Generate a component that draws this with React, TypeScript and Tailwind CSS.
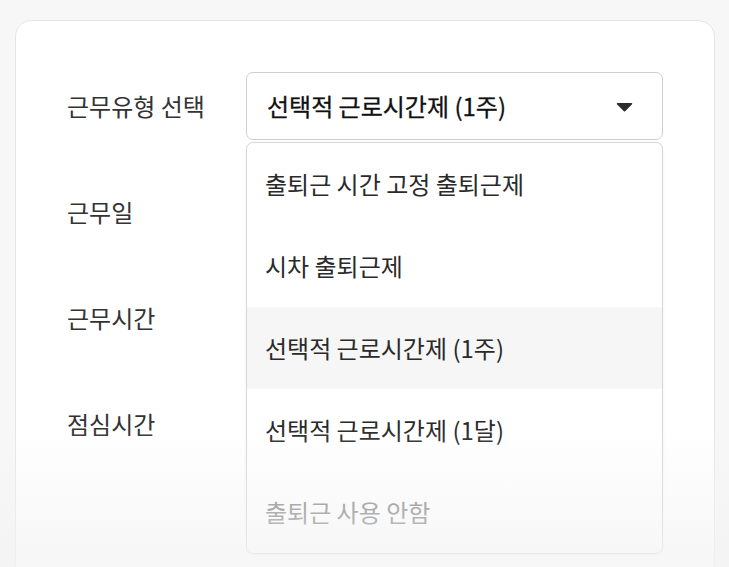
const options = [
  { label: "출퇴근 시간 고정 출퇴근제" },
  { label: "시차 출퇴근제" },
  { label: "선택적 근로시간제 (1주)", selected: true },
  { label: "선택적 근로시간제 (1달)" },
  { label: "출퇴근 사용 안함", disabled: true },
];

const labels = ["근무유형 선택", "근무일", "근무시간", "점심시간"];

function Dropdown() {
  return (
    <div className="relative w-[417px]">
      <button
        type="button"
        className="flex h-[68px] w-full items-center justify-between rounded-[7px] border border-[#cfcfcf] bg-white pl-[20px] pr-[29px] text-[24px] text-[#111] [-webkit-text-stroke:0.3px_#111]"
      >
        <span>선택적 근로시간제 (1주)</span>
        <svg width="17" height="10" viewBox="0 0 17 10" className="mt-[1px]">
          <path d="M1.5 1h14a.8.8 0 0 1 .6 1.3L9.1 9.2a.8.8 0 0 1-1.2 0L.9 2.3A.8.8 0 0 1 1.5 1z" fill="#2b2b2b" />
        </svg>
      </button>

      {/* option list */}
      <ul className="absolute left-0 right-0 top-full z-10 mt-[2px] overflow-hidden rounded-[7px] border border-[#d6d6d6] bg-white shadow-[0_1px_3px_rgba(0,0,0,0.06)]">
        {options.map((o) => (
          <li
            key={o.label}
            className={`flex h-[82px] items-center pl-[18px] text-[24px] ${
              o.selected ? "bg-[#f6f6f6]" : ""
            } ${o.disabled ? "text-[#777]" : "text-[#2a2a2a]"}`}
          >
            {o.label}
          </li>
        ))}
      </ul>
    </div>
  );
}

export default function App() {
  return (
    <div className="relative h-[567px] overflow-hidden bg-[#f7f7f7] pt-[20px] pl-[15px] pr-[14px] font-['Noto_Sans_CJK_KR','Noto_Sans',sans-serif]">
      <div className="h-[600px] rounded-t-[17px] border border-[#e6e6e6] bg-white pt-[51px] pl-[51px] pr-[51px]">
        <div className="flex flex-col gap-[38px]">
          {labels.map((label, i) => (
            <div key={label} className="flex h-[68px] items-center">
              <div className="w-[179px] text-[24px] text-[#333]">{label}</div>
              {i === 0 && <Dropdown />}
            </div>
          ))}
        </div>
      </div>

      {/* bottom fade */}
      <div className="pointer-events-none absolute inset-x-0 bottom-0 z-20 h-[140px] bg-linear-to-b from-[#f5f5f5]/0 to-[#f3f3f3]/75" />
    </div>
  );
}
